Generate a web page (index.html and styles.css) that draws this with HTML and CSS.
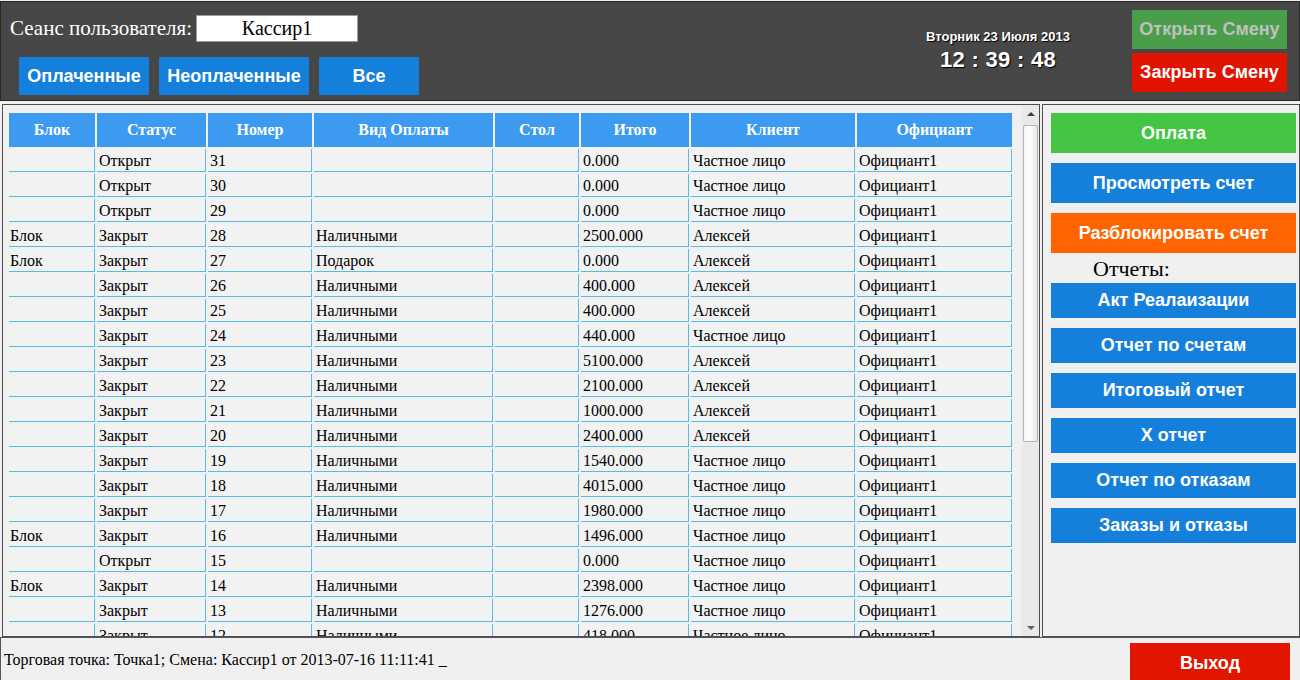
FILE: index.html
```html
<!DOCTYPE html>
<html lang="ru">
<head>
<meta charset="utf-8">
<title>Касса</title>
<link rel="stylesheet" href="styles.css">
</head>
<body>
<div class="app">
  <header class="topbar">
    <div class="session">
      <div class="session-row">
        <span class="session-label">Сеанс пользователя:</span>
        <span class="session-user">Кассир1</span>
      </div>
      <div class="filters">
        <button class="btn btn-blue filter-paid">Оплаченные</button>
        <button class="btn btn-blue filter-unpaid">Неоплаченные</button>
        <button class="btn btn-blue filter-all">Все</button>
      </div>
    </div>
    <div class="clock">
      <div class="clock-date">Вторник 23 Июля 2013</div>
      <div class="clock-time">12 : 39 : 48</div>
    </div>
    <div class="shift">
      <button class="btn shift-open">Открыть Смену</button>
      <button class="btn shift-close">Закрыть Смену</button>
    </div>
  </header>

  <main class="main">
    <section class="orders">
      <div class="table-wrap">
        <table class="orders-table">
          <thead>
            <tr>
              <th class="c-block">Блок</th>
              <th class="c-status">Статус</th>
              <th class="c-num">Номер</th>
              <th class="c-pay">Вид Оплаты</th>
              <th class="c-table">Стол</th>
              <th class="c-total">Итого</th>
              <th class="c-client">Клиент</th>
              <th class="c-waiter">Официант</th>
            </tr>
          </thead>
          <tbody>
            <tr><td></td><td>Открыт</td><td>31</td><td></td><td></td><td>0.000</td><td>Частное лицо</td><td>Официант1</td></tr>
            <tr><td></td><td>Открыт</td><td>30</td><td></td><td></td><td>0.000</td><td>Частное лицо</td><td>Официант1</td></tr>
            <tr><td></td><td>Открыт</td><td>29</td><td></td><td></td><td>0.000</td><td>Частное лицо</td><td>Официант1</td></tr>
            <tr><td>Блок</td><td>Закрыт</td><td>28</td><td>Наличными</td><td></td><td>2500.000</td><td>Алексей</td><td>Официант1</td></tr>
            <tr><td>Блок</td><td>Закрыт</td><td>27</td><td>Подарок</td><td></td><td>0.000</td><td>Алексей</td><td>Официант1</td></tr>
            <tr><td></td><td>Закрыт</td><td>26</td><td>Наличными</td><td></td><td>400.000</td><td>Алексей</td><td>Официант1</td></tr>
            <tr><td></td><td>Закрыт</td><td>25</td><td>Наличными</td><td></td><td>400.000</td><td>Алексей</td><td>Официант1</td></tr>
            <tr><td></td><td>Закрыт</td><td>24</td><td>Наличными</td><td></td><td>440.000</td><td>Частное лицо</td><td>Официант1</td></tr>
            <tr><td></td><td>Закрыт</td><td>23</td><td>Наличными</td><td></td><td>5100.000</td><td>Алексей</td><td>Официант1</td></tr>
            <tr><td></td><td>Закрыт</td><td>22</td><td>Наличными</td><td></td><td>2100.000</td><td>Алексей</td><td>Официант1</td></tr>
            <tr><td></td><td>Закрыт</td><td>21</td><td>Наличными</td><td></td><td>1000.000</td><td>Алексей</td><td>Официант1</td></tr>
            <tr><td></td><td>Закрыт</td><td>20</td><td>Наличными</td><td></td><td>2400.000</td><td>Алексей</td><td>Официант1</td></tr>
            <tr><td></td><td>Закрыт</td><td>19</td><td>Наличными</td><td></td><td>1540.000</td><td>Частное лицо</td><td>Официант1</td></tr>
            <tr><td></td><td>Закрыт</td><td>18</td><td>Наличными</td><td></td><td>4015.000</td><td>Частное лицо</td><td>Официант1</td></tr>
            <tr><td></td><td>Закрыт</td><td>17</td><td>Наличными</td><td></td><td>1980.000</td><td>Частное лицо</td><td>Официант1</td></tr>
            <tr><td>Блок</td><td>Закрыт</td><td>16</td><td>Наличными</td><td></td><td>1496.000</td><td>Частное лицо</td><td>Официант1</td></tr>
            <tr><td></td><td>Открыт</td><td>15</td><td></td><td></td><td>0.000</td><td>Частное лицо</td><td>Официант1</td></tr>
            <tr><td>Блок</td><td>Закрыт</td><td>14</td><td>Наличными</td><td></td><td>2398.000</td><td>Частное лицо</td><td>Официант1</td></tr>
            <tr><td></td><td>Закрыт</td><td>13</td><td>Наличными</td><td></td><td>1276.000</td><td>Частное лицо</td><td>Официант1</td></tr>
            <tr><td></td><td>Закрыт</td><td>12</td><td>Наличными</td><td></td><td>418.000</td><td>Частное лицо</td><td>Официант1</td></tr>
          </tbody>
        </table>
      </div>
      <div class="scrollbar">
        <div class="scroll-arrow scroll-up"></div>
        <div class="scroll-track"><div class="scroll-thumb"></div></div>
        <div class="scroll-arrow scroll-down"></div>
      </div>
    </section>

    <aside class="actions">
      <button class="btn act btn-green">Оплата</button>
      <button class="btn act btn-blue">Просмотреть счет</button>
      <button class="btn act btn-orange">Разблокировать счет</button>
      <div class="reports-label">Отчеты:</div>
      <button class="btn report btn-blue">Акт Реалаизации</button>
      <button class="btn report btn-blue">Отчет по счетам</button>
      <button class="btn report btn-blue">Итоговый отчет</button>
      <button class="btn report btn-blue">X отчет</button>
      <button class="btn report btn-blue">Отчет по отказам</button>
      <button class="btn report btn-blue">Заказы и отказы</button>
    </aside>
  </main>

  <footer class="status">
    <span class="status-text">Торговая точка: Точка1; Смена: Кассир1 от 2013-07-16 11:11:41 _</span>
    <button class="btn btn-exit">Выход</button>
  </footer>
</div>
</body>
</html>
```

FILE: styles.css
```css
* { box-sizing: border-box; }

html, body {
  margin: 0;
  padding: 0;
  width: 1300px;
  height: 680px;
  overflow: hidden;
  background: #f0f0f0;
  font-family: "Liberation Serif", "Times New Roman", serif;
}

.app {
  width: 1300px;
  height: 680px;
  padding-top: 1px;
  display: flex;
  flex-direction: column;
}

/* ---------- buttons ---------- */
.btn {
  border: none;
  margin: 0;
  padding: 0;
  font-family: "Liberation Sans", Arial, sans-serif;
  font-weight: bold;
  font-size: 18px;
  color: #ffffff;
  cursor: pointer;
  display: flex;
  align-items: center;
  justify-content: center;
}
.btn-blue { background: #1580dc; }
.btn-green { background: #44c544; }
.btn-orange { background: #ff6400; }

/* ---------- header ---------- */
.topbar {
  height: 100px;
  flex: none;
  background: #474747;
  border: 1px solid #262626;
  display: flex;
  align-items: flex-start;
}

.session {
  flex: 1;
  padding-left: 9px;
}

.session-row {
  margin-top: 13px;
  height: 27px;
  display: flex;
  align-items: center;
  gap: 4px;
}

.session-label {
  color: #ffffff;
  font-family: "Liberation Serif", "Times New Roman", serif;
  font-size: 21px;
  line-height: 27px;
}

.session-user {
  width: 162px;
  height: 27px;
  background: #ffffff;
  border: 1px solid #9a9a9a;
  color: #000000;
  font-family: "Liberation Serif", "Times New Roman", serif;
  font-size: 20px;
  line-height: 25px;
  text-align: center;
}

.filters {
  margin-top: 15px;
  padding-left: 9px;
  display: flex;
  gap: 10px;
}
.filters .btn { height: 38px; }
.filter-paid { width: 130px; }
.filter-unpaid { width: 150px; }
.filter-all { width: 100px; }

.clock {
  width: 200px;
  margin-right: 34px;
  padding-top: 27px;
  text-align: center;
  color: #ffffff;
  font-family: "Liberation Sans", Arial, sans-serif;
  font-weight: bold;
  text-shadow: 1px 1px 1px #000000;
}
.clock-date {
  font-size: 13px;
  line-height: 16px;
}
.clock-time {
  margin-top: 2px;
  font-size: 22px;
  line-height: 26px;
  letter-spacing: 0.3px;
}

.shift {
  margin-right: 12px;
  padding-top: 8px;
  display: flex;
  flex-direction: column;
  gap: 4px;
}
.shift .btn { width: 155px; height: 39px; }
.shift-open { background: #4a9d4a; color: #c0c0c0; }
.shift-close { background: #e01400; }

/* ---------- main ---------- */
.main {
  flex: none;
  height: 533px;
  margin-top: 3px;
  padding-left: 2px;
  display: flex;
  gap: 2px;
}

.orders {
  width: 1038px;
  height: 533px;
  border: 1px solid #4e4e4e;
  display: flex;
}

.table-wrap {
  flex: 1;
  overflow: hidden;
  padding: 6px 0 0 4px;
}

.orders-table {
  table-layout: fixed;
  width: 1007px;
  border-collapse: separate;
  border-spacing: 2px;
  font-family: "Liberation Serif", "Times New Roman", serif;
  font-size: 16px;
  color: #000000;
}

.orders-table th {
  background: #3c9af0;
  color: #ffffff;
  font-weight: bold;
  font-size: 16px;
  height: 34px;
  line-height: 34px;
  padding: 0;
  text-align: center;
  white-space: nowrap;
}
.c-block { width: 86px; }
.c-status { width: 109px; }
.c-num { width: 104px; }
.c-pay { width: 179px; }
.c-table { width: 84px; }
.c-total { width: 108px; }
.c-client { width: 164px; }
.c-waiter { width: 155px; }

.orders-table td {
  background: #f2f2f2;
  padding: 1px 0 0 2px;
  line-height: 21px;
  border-right: 1px solid #55bde0;
  border-bottom: 1px solid #55bde0;
  white-space: nowrap;
  overflow: hidden;
}
.orders-table td:first-child { padding-left: 1px; }

/* ---------- fake scrollbar ---------- */
.scrollbar {
  width: 17px;
  flex: none;
  background: #e9e9e9;
  display: flex;
  flex-direction: column;
}
.scroll-arrow {
  height: 17px;
  flex: none;
  display: flex;
  align-items: center;
  justify-content: center;
}
.scroll-up::before {
  content: "";
  border-left: 4px solid transparent;
  border-right: 4px solid transparent;
  border-bottom: 4px solid #404040;
}
.scroll-down::before {
  content: "";
  border-left: 4px solid transparent;
  border-right: 4px solid transparent;
  border-top: 4px solid #606060;
}
.scroll-track {
  flex: 1;
  padding: 3px 1px 0 1px;
}
.scroll-thumb {
  height: 317px;
  background: linear-gradient(to right, #f6f6f6, #ffffff 45%, #e6e6e6);
  border: 1px solid #b5b5b5;
  border-radius: 2px;
}

/* ---------- right actions ---------- */
.actions {
  width: 258px;
  height: 533px;
  border: 1px solid #4e4e4e;
  padding: 8px 0 0 8px;
  display: flex;
  flex-direction: column;
}
.actions .btn { width: 245px; flex: none; }
.act { height: 40px; margin-bottom: 10px; }
.act:nth-of-type(3) { margin-bottom: 0; }
.reports-label {
  height: 30px;
  padding-left: 42px;
  padding-top: 2px;
  font-family: "Liberation Serif", "Times New Roman", serif;
  font-size: 22px;
  line-height: 28px;
  color: #000000;
}
.report { height: 35px; margin-bottom: 10px; }

/* ---------- footer ---------- */
.status {
  flex: 1;
  border-top: 1px solid #555555;
  border-left: 1px solid #555555;
  display: flex;
  justify-content: space-between;
  align-items: flex-start;
}
.status-text {
  margin-top: 12px;
  padding-left: 3px;
  font-family: "Liberation Serif", "Times New Roman", serif;
  font-size: 16px;
  line-height: 20px;
  color: #000000;
}
.btn-exit {
  margin-top: 5px;
  margin-right: 10px;
  width: 160px;
  height: 40px;
  background: #e21500;
}
```
